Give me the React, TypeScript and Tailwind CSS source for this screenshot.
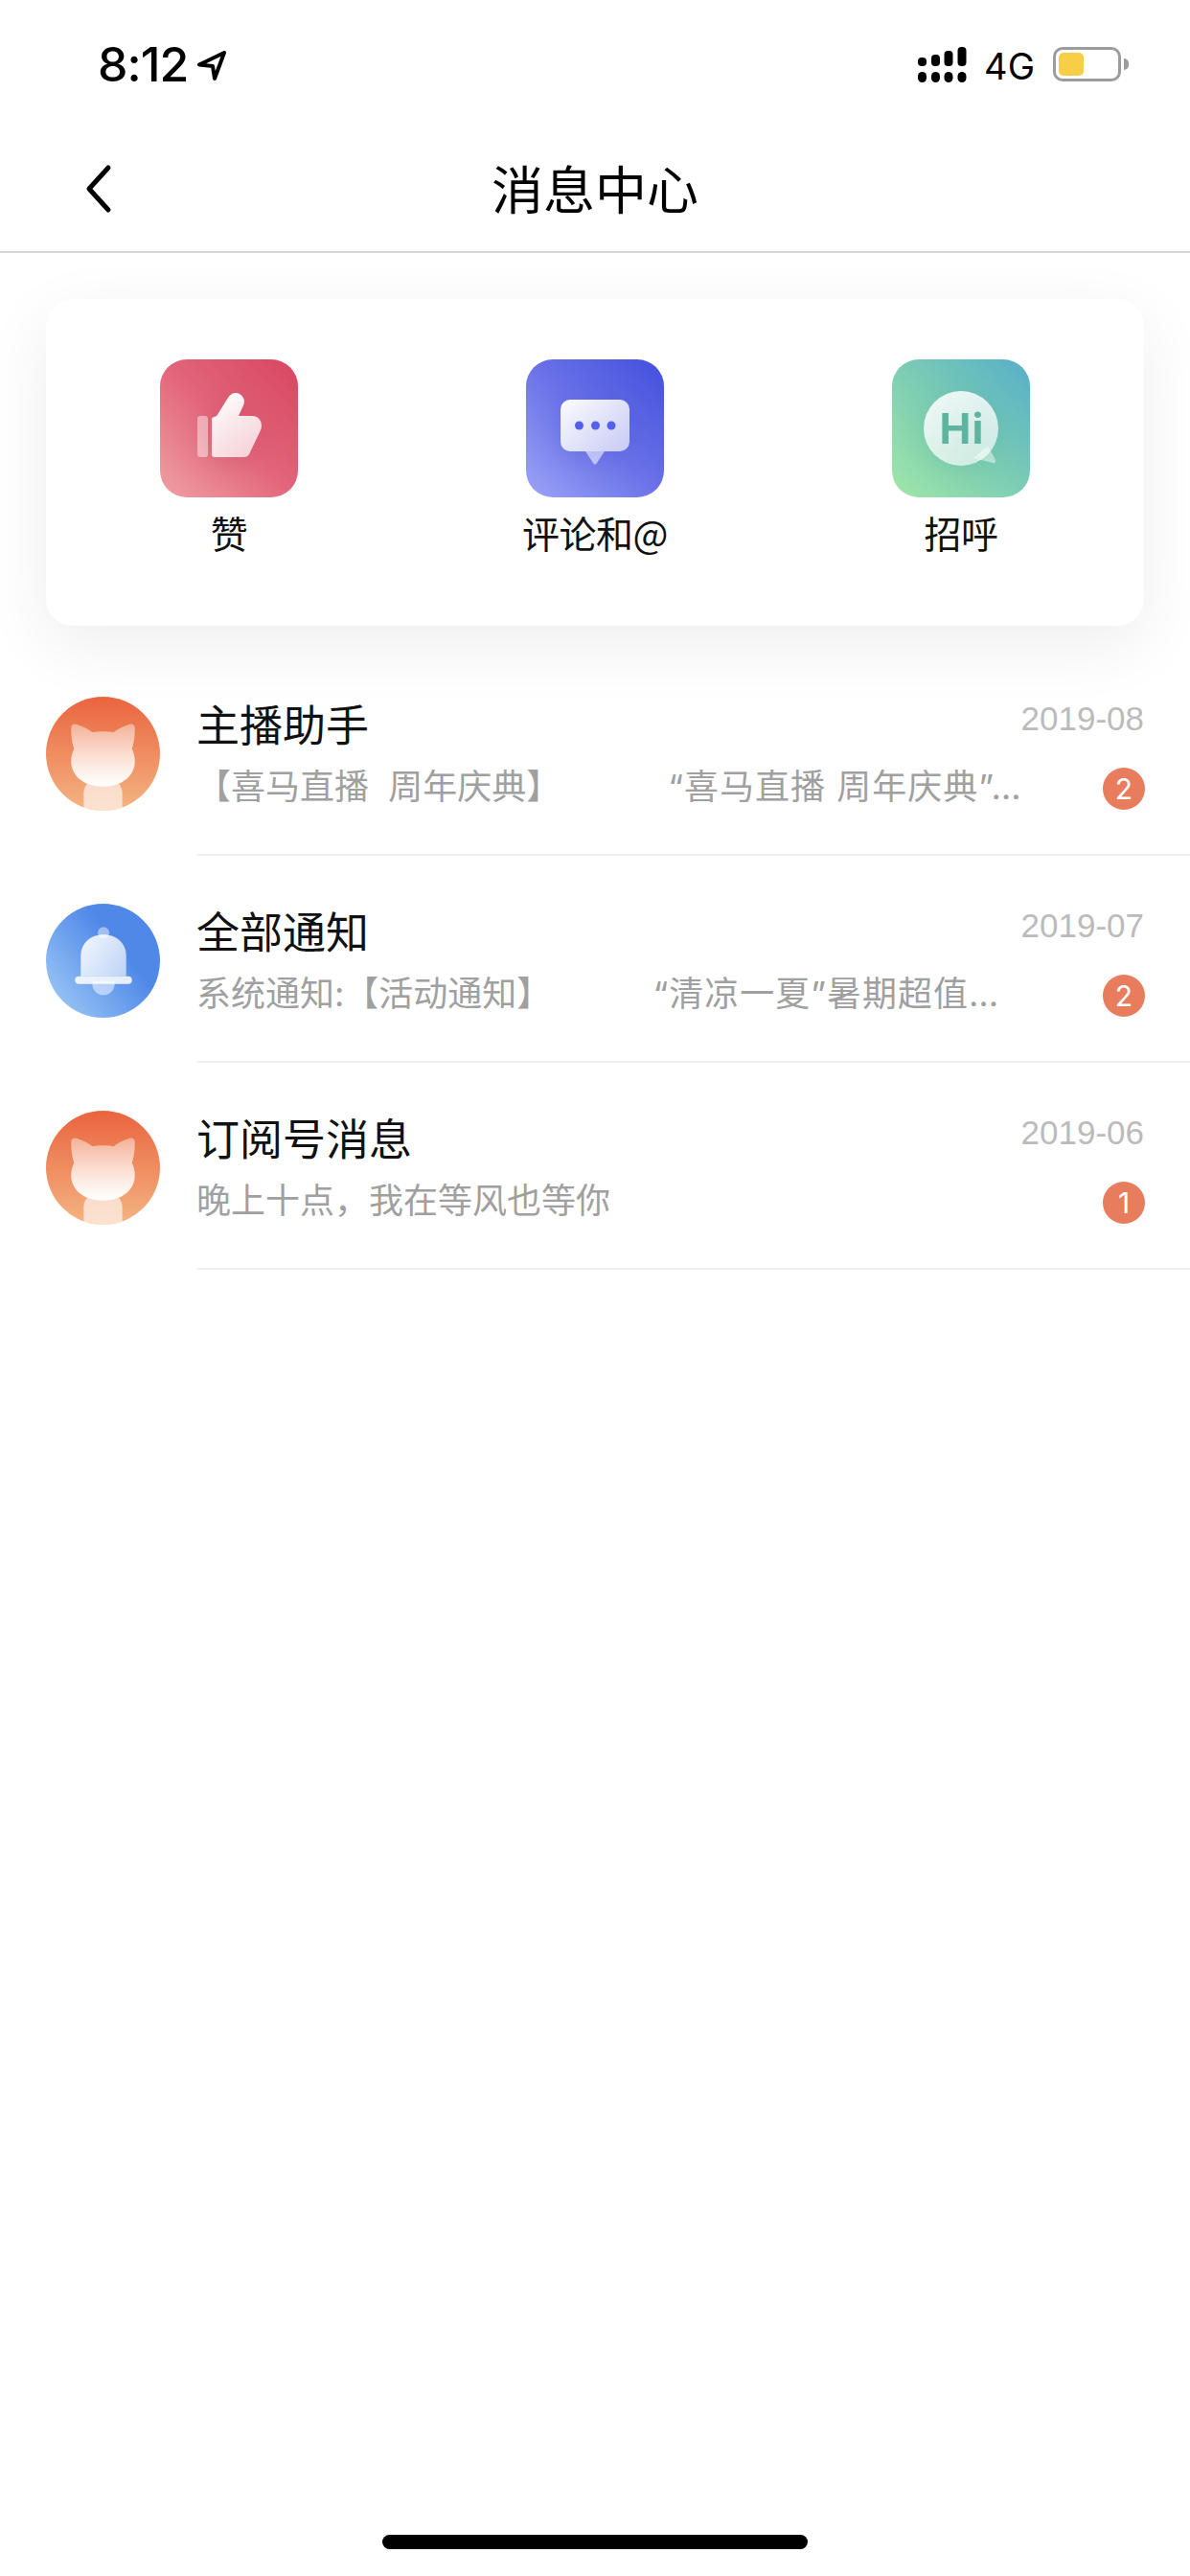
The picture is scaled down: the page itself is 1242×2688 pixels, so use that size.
import React from 'react';

const cjk = "font-['Noto_Sans_CJK_SC','Noto_Sans',sans-serif]";
const latinFirst = "font-['Inter','Noto_Sans_CJK_SC',sans-serif]";

const CatAvatar: React.FC<{ id: string }> = ({ id }) => (
  <svg viewBox="0 0 118 118" className="w-[119px] h-[119px] shrink-0">
    <defs>
      <linearGradient id={`${id}-bg`} x1="0" y1="0" x2="0" y2="1">
        <stop offset="0" stopColor="#e9643e" />
        <stop offset="1" stopColor="#f5b583" />
      </linearGradient>
      <linearGradient id={`${id}-cat`} x1="0" y1="0" x2="0" y2="1">
        <stop offset="0" stopColor="#fff" stopOpacity="0.42" />
        <stop offset="1" stopColor="#fff" />
      </linearGradient>
      <clipPath id={`${id}-clip`}>
        <circle cx="59" cy="59" r="59" />
      </clipPath>
    </defs>
    <circle cx="59" cy="59" r="59" fill={`url(#${id}-bg)`} />
    <g clipPath={`url(#${id}-clip)`}>
      <path d="M39 100c0-6 3-10 6-12h28c3 2 6 6 6 12v20H39z" fill="#fff" fillOpacity="0.62" />
      <path
        d="M33 29c-4-2-7 0-7 4 0 8 1 15 3 21-2 4-3 8-3 13 0 14 12 26 33 26s33-12 33-26c0-5-1-9-3-13 2-6 3-13 3-21 0-4-3-6-7-4-5 2-11 4-15 8-3-1-7-1-11-1s-8 0-11 1c-4-4-10-6-15-8z"
        fill={`url(#${id}-cat)`}
      />
    </g>
  </svg>
);

const BellAvatar = () => (
  <svg viewBox="0 0 118 118" className="w-[119px] h-[119px] shrink-0">
    <defs>
      <linearGradient id="bell-bg" x1="1" y1="0.2" x2="0" y2="1">
        <stop offset="0.3" stopColor="#5088e8" />
        <stop offset="1" stopColor="#a5d0f8" />
      </linearGradient>
      <linearGradient id="bell-body" x1="0" y1="0" x2="1" y2="1">
        <stop offset="0" stopColor="#fff" stopOpacity="0.92" />
        <stop offset="1" stopColor="#fff" stopOpacity="0.6" />
      </linearGradient>
    </defs>
    <circle cx="59" cy="59" r="59" fill="url(#bell-bg)" />
    <circle cx="59.5" cy="30" r="6" fill="#fff" fillOpacity="0.45" />
    <path d="M48 80h23v3a11.500 11.500 0 0 1-23 0z" fill="#fff" fillOpacity="0.5" />
    <path d="M36 75V54c0-13 10-22 23.500-22S83 41 83 54v21z" fill="url(#bell-body)" />
    <rect x="30" y="75" width="59" height="8" rx="4" fill="#fff" fillOpacity="0.85" />
  </svg>
);

const LikeIcon = () => (
  <svg viewBox="0 0 144 144" className="w-[144px] h-[144px] drop-shadow-[0_6px_14px_rgba(170,30,60,0.22)]">
    <defs>
      <linearGradient id="like-hand" x1="0.3" y1="0" x2="0.8" y2="1">
        <stop offset="0" stopColor="#fff" stopOpacity="0.98" />
        <stop offset="1" stopColor="#fff" stopOpacity="0.72" />
      </linearGradient>
    </defs>
    <rect x="39" y="59" width="11" height="43" rx="3" fill="#fff" fillOpacity="0.45" />
    <path
      d="M54 63c0-2 1-3 3-3 2-1 3-2 4-4l10-16c3-5 8-6 12-4 5 3 6 8 4 12l-5 11h14c8 0 12 8 9 15l-12 25c-1 2-3 3-6 3H57c-2 0-3-1-3-3z"
      fill="url(#like-hand)"
    />
  </svg>
);

const CommentIcon = () => (
  <svg viewBox="0 0 144 144" className="w-[144px] h-[144px] drop-shadow-[0_6px_14px_rgba(40,50,190,0.22)]">
    <defs>
      <linearGradient id="comment-bubble" x1="0" y1="0" x2="1" y2="1">
        <stop offset="0" stopColor="#fff" stopOpacity="0.98" />
        <stop offset="1" stopColor="#fff" stopOpacity="0.65" />
      </linearGradient>
    </defs>
    <path d="M62 96h20l-8 12c-1 2-3 2-4 0z" fill="#fff" fillOpacity="0.55" />
    <rect x="36" y="42" width="72" height="54" rx="10" fill="url(#comment-bubble)" />
    <circle cx="55.500" cy="69" r="4.500" fill="#5560e8" />
    <circle cx="72.500" cy="69" r="4.500" fill="#5560e8" />
    <circle cx="89" cy="69" r="4.500" fill="#5560e8" />
  </svg>
);

const HiIcon = () => (
  <svg viewBox="0 0 144 144" className="w-[144px] h-[144px] drop-shadow-[0_6px_14px_rgba(30,120,110,0.18)]">
    <defs>
      <linearGradient id="hi-bubble" x1="0.2" y1="0" x2="0.7" y2="1">
        <stop offset="0" stopColor="#fff" stopOpacity="0.88" />
        <stop offset="1" stopColor="#fff" stopOpacity="0.65" />
      </linearGradient>
    </defs>
    <path d="M100 90l8 15c1 2-1 4-3 3l-20-5z" fill="#fff" fillOpacity="0.45" />
    <circle cx="72" cy="72" r="39" fill="url(#hi-bubble)" />
    <text x="73" y="88" textAnchor="middle" fontFamily="'Inter',sans-serif" fontWeight="700" fontSize="44" letterSpacing="1" fill="#5db59f">
      Hi
    </text>
  </svg>
);

const shortcuts = [
  { label: '赞', tile: 'from-[#eea0a4] via-[#e2657b] to-[#d8455f]', icon: <LikeIcon /> },
  { label: '评论和@', tile: 'from-[#9ba3f6] via-[#6b72e8] to-[#434edd]', icon: <CommentIcon /> },
  { label: '招呼', tile: 'from-[#a0e6a8] via-[#7ccdb4] to-[#56aec8]', icon: <HiIcon /> },
];

const messages = [
  {
    name: '主播助手',
    date: '2019-08',
    avatar: <CatAvatar id="cat-a" />,
    lead: '【喜马直播  周年庆典】',
    tail: '“喜马直播 周年庆典”…',
    tailClass: 'ml-[112px] tracking-[1px]',
    count: 2,
  },
  {
    name: '全部通知',
    date: '2019-07',
    avatar: <BellAvatar />,
    lead: '系统通知:【活动通知】',
    tail: '“清凉一夏”暑期超值…',
    tailClass: 'ml-[106px] tracking-[1px]',
    count: 2,
  },
  {
    name: '订阅号消息',
    date: '2019-06',
    avatar: <CatAvatar id="cat-b" />,
    lead: '晚上十点，我在等风也等你',
    tail: '',
    tailClass: '',
    count: 1,
  },
];

export default function App() {
  return (
    <div className={`relative w-[1242px] h-[2688px] bg-white overflow-hidden text-black ${cjk}`}>
      {/* status bar */}
      <div className="h-[132px] flex items-start justify-between pl-[102px] pr-[64px] pt-[42px]">
        <div className="flex items-center gap-[9px] h-[50px]">
          <span className="font-['Inter',sans-serif] font-medium text-[50px] leading-none tracking-[-1px]">8:12</span>
          <svg viewBox="0 0 32 33" className="w-[32px] h-[33px] mt-[2px]" fill="none" stroke="#000" strokeWidth="4" strokeLinejoin="round">
            <path d="M29 3L3 15.500l14 1.500 2 13z" />
          </svg>
        </div>
        <div className="flex items-center h-[50px]">
          <svg viewBox="0 0 51 37" className="w-[51px] h-[37px] mr-[18px]" fill="#000">
            <rect x="0" y="11" width="9" height="9" rx="4" />
            <rect x="14" y="8" width="9" height="12" rx="4" />
            <rect x="27.500" y="4" width="9" height="16" rx="4" />
            <rect x="41.500" y="0" width="9" height="20" rx="4" />
            <rect x="0" y="26" width="9" height="11" rx="4.500" />
            <rect x="14" y="26" width="9" height="11" rx="4.500" />
            <rect x="27.500" y="26" width="9" height="11" rx="4.500" />
            <rect x="41.500" y="26" width="9" height="11" rx="4.500" />
          </svg>
          <span className="font-['Inter',sans-serif] text-[38px] leading-none mr-[19px] mt-[3px]">4G</span>
          <div className="w-[71px] h-[36px] rounded-[10px] border-[3px] border-[#9c9c9c] p-[3px]">
            <div className="w-[26px] h-full rounded-[5px] bg-[#f9ce47]" />
          </div>
          <div className="w-[5px] h-[12px] ml-[3px] rounded-r-full bg-[#9c9c9c]" />
        </div>
      </div>

      {/* nav bar */}
      <div className="relative h-[132px] flex items-center justify-center border-b-2 border-[#d5d5d5] pb-[3px]">
        <svg viewBox="0 0 32 52" className="absolute left-[86px] top-[39px] w-[32px] h-[52px]" fill="none" stroke="#000" strokeWidth="5" strokeLinecap="round" strokeLinejoin="round">
          <path d="M27 4L7 26l20 22" />
        </svg>
        <h1 className="text-[54px] leading-none font-normal">消息中心</h1>
      </div>

      {/* shortcuts card */}
      <div className="mt-[48px] mx-[48px] h-[341px] rounded-[28px] bg-white shadow-[0_20px_70px_rgba(0,0,0,0.07)] grid grid-cols-3 pt-[63px]">
        {shortcuts.map((s) => (
          <div key={s.label} className="flex flex-col items-center">
            <div className={`w-[144px] h-[144px] rounded-[28px] bg-gradient-to-tr ${s.tile}`}>{s.icon}</div>
            <span className="mt-[13px] text-[39px] leading-[46px] tracking-[-0.5px] text-[#111]">{s.label}</span>
          </div>
        ))}
      </div>

      {/* message list */}
      <div className="relative mt-[24px]">
        {messages.map((m) => (
          <div key={m.name} className="flex h-[216px] pl-[48px]">
            <div className="pt-[50px]">{m.avatar}</div>
            <div className="ml-[38px] flex-1 min-w-0 border-b-2 border-[#f0f0f0] pt-[46px]">
              <div className="flex items-start justify-between pr-[48px]">
                <span className="text-[45px] leading-[64px] text-[#111]">{m.name}</span>
                <span className="font-['Liberation_Sans',sans-serif] mt-[5px] text-[35px] leading-[44px] text-[#bbbbbb]">{m.date}</span>
              </div>
              <div className="flex items-center justify-between pr-[47px] mt-[4px]">
                <div className={`flex text-[36px] leading-[60px] text-[#a0a0a0] whitespace-pre ${latinFirst}`}>
                  <span>{m.lead}</span>
                  {m.tail && <span className={m.tailClass}>{m.tail}</span>}
                </div>
                <div className="w-[44px] h-[44px] mt-[4px] rounded-full bg-[#e87d5e] text-white flex items-center justify-center font-['Inter',sans-serif] text-[30px] leading-none">
                  {m.count}
                </div>
              </div>
            </div>
          </div>
        ))}
      </div>

      {/* home indicator */}
      <div className="absolute left-[399px] top-[2645px] w-[444px] h-[15px] rounded-full bg-black" />
    </div>
  );
}
